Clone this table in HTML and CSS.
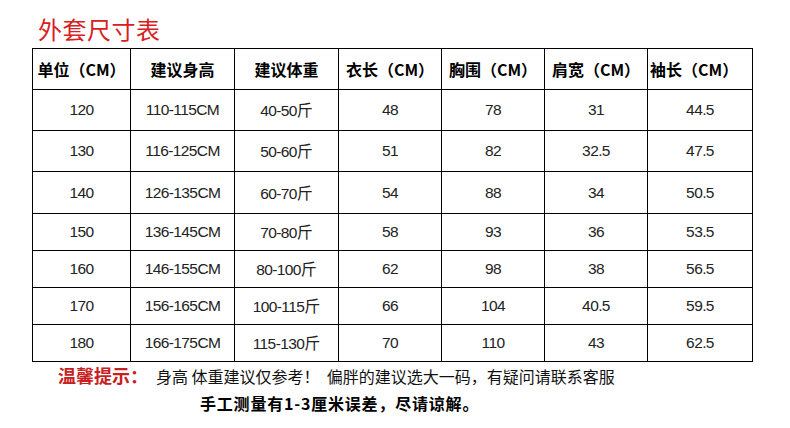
FILE: index.html
```html
<!DOCTYPE html>
<html lang="zh-CN">
<head>
<meta charset="utf-8">
<title>外套尺寸表</title>
<link rel="stylesheet" href="styles.css">
</head>
<body>
<div class="page">
  <h1 class="title">外套尺寸表</h1>
  <table class="size-table">
    <colgroup>
      <col class="c1"><col class="c2"><col class="c3"><col class="c4"><col class="c5"><col class="c6"><col class="c7">
    </colgroup>
    <thead>
      <tr class="r-head">
        <th>单位（CM）</th><th>建议身高</th><th>建议体重</th><th>衣长（CM）</th><th>胸围（CM）</th><th>肩宽（CM）</th><th class="last">袖长（CM）</th>
      </tr>
    </thead>
    <tbody>
      <tr class="r-a"><td>120</td><td>110-115CM</td><td>40-50<span class="cjk">斤</span></td><td>48</td><td>78</td><td>31</td><td>44.5</td></tr>
      <tr class="r-a"><td>130</td><td>116-125CM</td><td>50-60<span class="cjk">斤</span></td><td>51</td><td>82</td><td>32.5</td><td>47.5</td></tr>
      <tr class="r-b"><td>140</td><td>126-135CM</td><td>60-70<span class="cjk">斤</span></td><td>54</td><td>88</td><td>34</td><td>50.5</td></tr>
      <tr class="r-c"><td>150</td><td>136-145CM</td><td>70-80<span class="cjk">斤</span></td><td>58</td><td>93</td><td>36</td><td>53.5</td></tr>
      <tr class="r-d"><td>160</td><td>146-155CM</td><td>80-100<span class="cjk">斤</span></td><td>62</td><td>98</td><td>38</td><td>56.5</td></tr>
      <tr class="r-d"><td>170</td><td>156-165CM</td><td>100-115<span class="cjk">斤</span></td><td>66</td><td>104</td><td>40.5</td><td>59.5</td></tr>
      <tr class="r-d"><td>180</td><td>166-175CM</td><td>115-130<span class="cjk">斤</span></td><td>70</td><td>110</td><td>43</td><td>62.5</td></tr>
    </tbody>
  </table>
  <p class="tip"><span class="tip-label">温馨提示：</span>身高 体重建议仅参考！&nbsp; 偏胖的建议选大一码，有疑问请联系客服</p>
  <p class="note">手工测量有1-3厘米误差，尽请谅解。</p>
</div>
</body>
</html>
```
FILE: styles.css
```css
html, body {
  margin: 0;
  padding: 0;
  background: #ffffff;
}

.page {
  width: 790px;
  height: 428px;
  padding: 12px 0 0 32px;
  box-sizing: border-box;
  overflow: hidden;
  font-family: "Noto Sans CJK SC", "Noto Sans", sans-serif;
  color: #111;
}

.title {
  margin: 0 0 2px 6px;
  font-size: 24px;
  line-height: 34px;
  font-weight: 400;
  color: #d8201f;
  letter-spacing: 0.5px;
}

.size-table {
  border-collapse: collapse;
  table-layout: fixed;
  width: 721px;
}

.c1 { width: 98px; }
.c2 { width: 104px; }
.c3 { width: 104px; }
.c4 { width: 103px; }
.c5 { width: 103px; }
.c6 { width: 103px; }
.c7 { width: 105px; }

.size-table th,
.size-table td {
  border: 1px solid #000;
  padding: 0;
  text-align: center;
  vertical-align: middle;
  white-space: nowrap;
  overflow: hidden;
  line-height: 1;
}

.size-table th {
  font-size: 16px;
  font-weight: 700;
  color: #000;
}

.size-table th.last {
  text-align: left;
  padding-left: 2px;
}

.size-table td {
  font-family: "Liberation Sans", "Noto Sans CJK SC", sans-serif;
  font-size: 15.5px;
  letter-spacing: -0.6px;
  color: #222;
}

.size-table td .cjk {
  font-family: "Noto Sans CJK SC", sans-serif;
  font-size: 16px;
  letter-spacing: 0;
  line-height: 1;
}

.r-head { height: 41px; }
.r-a { height: 41px; }
.r-b { height: 42px; }
.r-c { height: 37px; }
.r-d { height: 37px; }

.tip {
  margin: 0 0 0 26px;
  font-size: 16px;
  line-height: 26px;
  color: #111;
}

.tip-label {
  font-size: 18px;
  font-weight: 700;
  color: #c8201e;
  margin-right: 8px;
}

.note {
  margin: 0 0 0 168px;
  font-size: 16px;
  line-height: 28px;
  font-weight: 700;
  letter-spacing: 0.8px;
  color: #000;
}
```
